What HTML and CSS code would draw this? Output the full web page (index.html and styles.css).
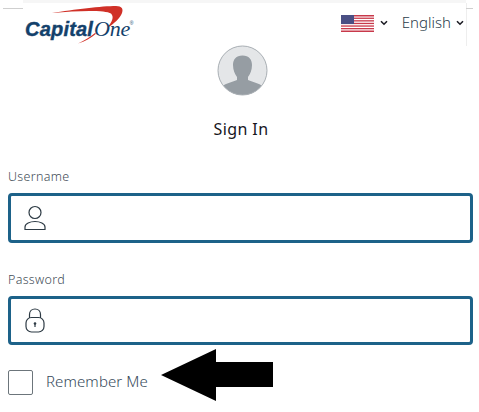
FILE: index.html
```html
<!DOCTYPE html>
<html lang="en">
<head>
<meta charset="utf-8">
<title>Sign In</title>
<link rel="stylesheet" href="styles.css">
</head>
<body>
<div class="topstrip"></div>
<header class="header">
  <div class="logo">
    <svg class="swoosh" width="110" height="46" viewBox="0 0 110 46" aria-hidden="true">
      <path d="M28 13C50 9.500 78 6 92 6C98 6 99.500 9 98 13C96 18 90 24 83 28C88 22 90.500 17 87 13.500C81 10 55 10.500 28 13Z" fill="#d03027"/>
      <path d="M54 43.500C60 41 66 37 71 33L72 33.800C67 38 61 41.500 54 43.500Z" fill="#d03027"/>
    </svg>
    <span class="logo-text"><span class="logo-capital">Capital</span><span class="logo-one">One</span><sup class="logo-reg">®</sup></span>
  </div>
  <div class="locale">
    <svg class="flag" width="33" height="17" viewBox="0 0 33 17" aria-hidden="true">
      <rect width="33" height="17" fill="#fff"/>
      <g fill="#c8394a">
        <rect y="0" width="33" height="1.500"/>
        <rect y="2.600" width="33" height="1.300"/>
        <rect y="5.200" width="33" height="1.300"/>
        <rect y="7.800" width="33" height="1.300"/>
        <rect y="10.400" width="33" height="1.300"/>
        <rect y="13" width="33" height="1.300"/>
        <rect y="15.500" width="33" height="1.500"/>
      </g>
      <rect width="13" height="9" fill="#4a4f84"/>
    </svg>
    <svg class="chev chev-flag" width="8" height="6" viewBox="0 0 8 6" aria-hidden="true"><path d="M1 1.200 4 4.200 7 1.200" fill="none" stroke="#1c1c24" stroke-width="1.600"/></svg>
    <span class="lang">English</span>
    <svg class="chev" width="8" height="6" viewBox="0 0 8 6" aria-hidden="true"><path d="M1 1.200 4 4.200 7 1.200" fill="none" stroke="#1c1c24" stroke-width="1.600"/></svg>
  </div>
</header>
<main class="main">
  <svg class="avatar" width="51" height="51" viewBox="0 0 51 51" aria-hidden="true">
    <defs><clipPath id="avatar-clip"><circle cx="25.500" cy="25.500" r="24.500"/></clipPath></defs>
    <circle cx="25.500" cy="25.500" r="24.500" fill="#e4e6e8"/>
    <g clip-path="url(#avatar-clip)" fill="#969da3">
      <path d="M25.500 10.500C32 10.500 35 14.500 35 20C35 25 33 29.500 31 32L31 35C36 37.500 43 38 46 42L46 51H5V42C8 38 15 37.500 20 35L20 32C18 29.500 16 25 16 20C16 14.500 19 10.500 25.500 10.500Z"/>
    </g>
    <circle cx="25.500" cy="25.500" r="24.500" fill="none" stroke="#a9afb4" stroke-width="1"/>
  </svg>
  <h1 class="title">Sign In</h1>
  <form class="form">
    <div class="field">
      <label class="label">Username</label>
      <div class="input">
        <svg class="input-icon" width="22" height="26" viewBox="0 0 22 26" aria-hidden="true">
          <circle cx="11" cy="7.500" r="6" fill="none" stroke="#2d3a44" stroke-width="1.200"/>
          <path d="M1 24.500V22C1 18.500 6 16.500 11 16.500S21 18.500 21 22V24.500Z" fill="none" stroke="#2d3a44" stroke-width="1.200"/>
        </svg>
      </div>
    </div>
    <div class="field field-password">
      <label class="label">Password</label>
      <div class="input input-password">
        <svg class="input-icon" width="20" height="25" viewBox="0 0 20 25" aria-hidden="true">
          <path d="M4.500 10V6.500C4.500 3 7 1 10 1S15.500 3 15.500 6.500V10" fill="none" stroke="#2d3a44" stroke-width="1.200"/>
          <rect x="1" y="9.500" width="18" height="14.500" rx="5.500" fill="none" stroke="#2d3a44" stroke-width="1.200"/>
          <circle cx="10" cy="15.500" r="1.300" fill="#2d3a44"/>
          <rect x="9.400" y="16" width="1.200" height="3" fill="#2d3a44"/>
        </svg>
      </div>
    </div>
    <div class="remember">
      <span class="checkbox"></span>
      <span class="remember-label">Remember Me</span>
    </div>
  </form>
</main>
<svg class="arrow" width="115" height="52" viewBox="0 0 115 52" aria-hidden="true">
  <path d="M1 26 56 0V13H113V38H56V52Z" fill="#000"/>
</svg>
</body>
</html>
```
FILE: styles.css
```css
* { box-sizing: border-box; }
html, body { margin: 0; padding: 0; }
body {
  width: 479px;
  height: 412px;
  overflow: hidden;
  background: #fff;
  font-family: "Noto Sans", "Open Sans", sans-serif;
  font-weight: 300;
  color: #2d3a44;
  position: relative;
}
.topstrip { height: 3px; margin: 0 13px 0 23px; background: #f6f6f6; }
.header {
  height: 43px;
  margin-right: 12px;
  border-right: 1px solid #eeeeee;
  display: flex;
  justify-content: space-between;
  align-items: flex-start;
  padding: 0 2px 0 24px;
  position: relative;
}
.header::before, .header::after {
  content: "";
  position: absolute;
  top: 5px;
  height: 1px;
  background: #cfcfcf;
}
.header::before { left: 3px; width: 20px; }
.header::after { left: 100%; width: 7px; }
.logo { width: 110px; height: 46px; position: relative; margin-top: -3px; }
.swoosh { position: absolute; left: 0; top: 0; }
.logo-text { position: absolute; left: 1px; top: 19px; white-space: nowrap; line-height: 20px; color: #13416b; }
.logo-capital { font: italic 700 20px/20px "Liberation Sans", sans-serif; letter-spacing: 0.2px; -webkit-text-stroke: 0.4px #13416b; }
.logo-one { font: italic 400 22px/20px "Liberation Serif", serif; margin-left: 1px; letter-spacing: -0.3px; }
.logo-reg { font: 400 5px/5px "Liberation Sans", sans-serif; vertical-align: 11px; margin-left: 0; }
.locale { display: flex; align-items: center; height: 40px; }
.flag { margin-right: 6px; }
.chev-flag { margin-right: 14px; }
.lang { font-size: 15px; line-height: 20px; margin-right: 5px; margin-top: -2px; color: #2b3d4c; }
.main { display: flex; flex-direction: column; align-items: center; padding: 0 6px 0 8px; }
.avatar { display: block; margin-top: -1px; margin-left: 4px; }
.title { margin: 22px 0 0 1px; font-size: 16px; line-height: 22px; font-weight: 400; color: #16161c; letter-spacing: 0.4px; }
.form { width: 100%; margin-top: 28px; display: flex; flex-direction: column; }
.label { display: block; font-size: 12.500px; line-height: 18px; letter-spacing: 0.3px; color: #3f4c57; margin-bottom: 7px; }
.field-password { margin-top: 28px; }
.input {
  height: 50px;
  border: 3px solid #1d6289;
  border-radius: 4px;
  display: flex;
  align-items: center;
  padding-left: 13px;
  background: #fff;
}
.input-password { height: 49px; padding-left: 14px; }
.remember { display: flex; align-items: center; margin-top: 25px; }
.checkbox { width: 25px; height: 25px; border: 1px solid #6c757b; border-radius: 2px; margin-right: 13px; }
.remember-label { font-size: 15px; line-height: 20px; padding-bottom: 3px; letter-spacing: 0.1px; color: #35495a; }
.arrow { position: absolute; left: 160px; top: 349px; }
```
